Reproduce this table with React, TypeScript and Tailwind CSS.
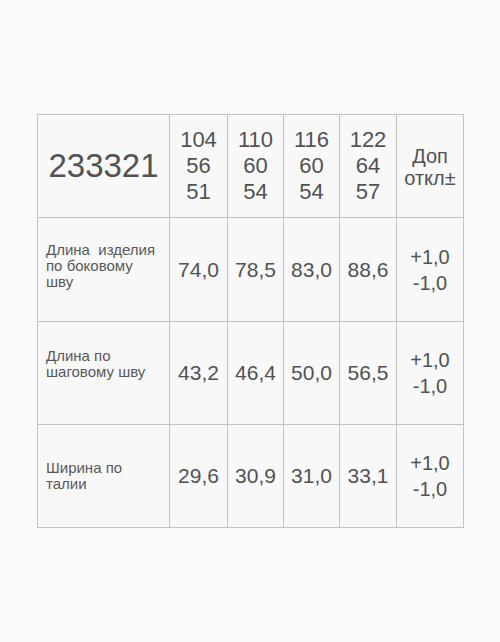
import React from "react";

const font = { fontFamily: '"Liberation Sans", Arial, sans-serif' };

const sizes = [
  ["104", "56", "51"],
  ["110", "60", "54"],
  ["116", "60", "54"],
  ["122", "64", "57"],
];

const rows: { label: string[]; values: string[]; pb: string }[] = [
  { label: ["Длина  изделия", "по боковому", "шву"], values: ["74,0", "78,5", "83,0", "88,6"], pb: "pb-[8px]" },
  { label: ["Длина по", "шаговому шву"], values: ["43,2", "46,4", "50,0", "56,5"], pb: "pb-[18px]" },
  { label: ["Ширина по", "талии"], values: ["29,6", "30,9", "31,0", "33,1"], pb: "pb-[0px]" },
];

export default function App() {
  return (
    <div className="w-[500px] h-[642px] bg-[#f9f9f9] pt-[114px] pl-[37px]" style={font}>
      <div className="grid w-fit grid-cols-[131px_57px_55px_55px_56px_66px] grid-rows-[102px_103px_102px_102px] gap-px bg-[#c2c2c2] p-px text-[#525252]">
        <div className="bg-[#f8f8f8] flex items-center justify-center text-[33px]">233321</div>
        {sizes.map((s, i) => (
          <div key={i} className="bg-[#f8f8f8] flex flex-col items-center justify-center text-[22px] leading-[26px]">
            {s.map((t, j) => (
              <span key={j}>{t}</span>
            ))}
          </div>
        ))}
        <div className="bg-[#f8f8f8] flex flex-col items-center justify-center text-[20px] leading-[22px] pt-[1px]">
          <span>Доп</span>
          <span>откл±</span>
        </div>
        {rows.map((r, i) => (
          <React.Fragment key={i}>
            <div className={`bg-[#f8f8f8] flex flex-col justify-center pl-[8px] text-[15px] leading-[16px] text-[#585858] whitespace-pre ${r.pb}`}>
              {r.label.map((l, j) => (
                <span key={j}>{l}</span>
              ))}
            </div>
            {r.values.map((v, j) => (
              <div key={j} className="bg-[#f8f8f8] flex items-center justify-center text-[21px]">
                {v}
              </div>
            ))}
            <div className="bg-[#f8f8f8] flex flex-col items-center justify-center text-[20px] leading-[26px]">
              <span>+1,0</span>
              <span>-1,0</span>
            </div>
          </React.Fragment>
        ))}
      </div>
    </div>
  );
}
